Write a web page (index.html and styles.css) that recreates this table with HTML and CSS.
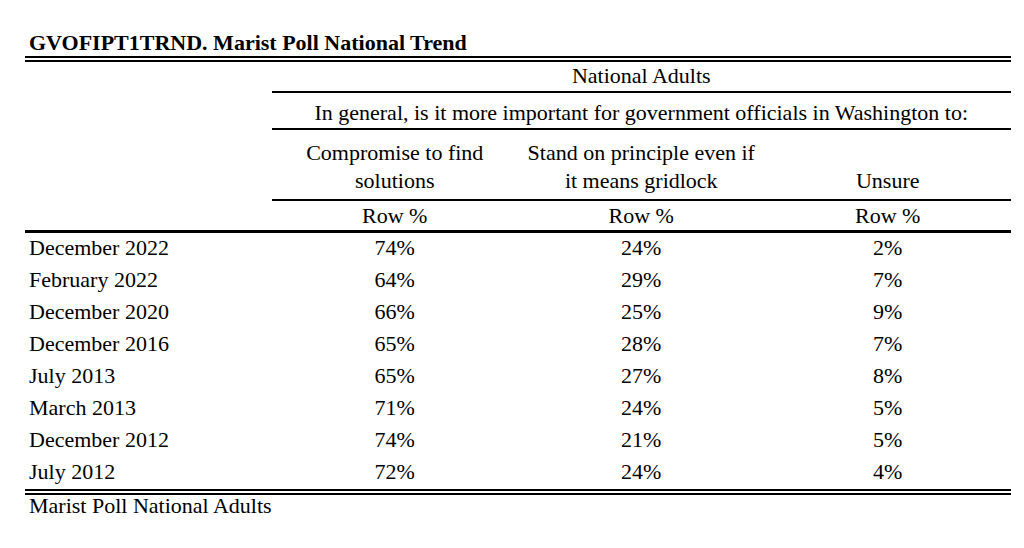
FILE: index.html
```html
<!DOCTYPE html>
<html lang="en">
<head>
<meta charset="utf-8">
<title>GVOFIPT1TRND. Marist Poll National Trend</title>
<link rel="stylesheet" href="styles.css">
</head>
<body>
<div class="page">
  <div class="title">GVOFIPT1TRND. Marist Poll National Trend</div>
  <table class="trend">
    <colgroup>
      <col class="col">
      <col class="col">
      <col class="col">
      <col class="col">
    </colgroup>
    <thead>
      <tr>
        <th class="stub" rowspan="4"></th>
        <th class="h-group" colspan="3">National Adults</th>
      </tr>
      <tr>
        <th class="h-question" colspan="3">In general, is it more important for government officials in Washington to:</th>
      </tr>
      <tr>
        <th class="h-answer">Compromise to find<br>solutions</th>
        <th class="h-answer">Stand on principle even if<br>it means gridlock</th>
        <th class="h-answer">Unsure</th>
      </tr>
      <tr>
        <th class="h-unit">Row %</th>
        <th class="h-unit">Row %</th>
        <th class="h-unit">Row %</th>
      </tr>
    </thead>
    <tbody>
      <tr><td class="label">December 2022</td><td>74%</td><td>24%</td><td>2%</td></tr>
      <tr><td class="label">February 2022</td><td>64%</td><td>29%</td><td>7%</td></tr>
      <tr><td class="label">December 2020</td><td>66%</td><td>25%</td><td>9%</td></tr>
      <tr><td class="label">December 2016</td><td>65%</td><td>28%</td><td>7%</td></tr>
      <tr><td class="label">July 2013</td><td>65%</td><td>27%</td><td>8%</td></tr>
      <tr><td class="label">March 2013</td><td>71%</td><td>24%</td><td>5%</td></tr>
      <tr><td class="label">December 2012</td><td>74%</td><td>21%</td><td>5%</td></tr>
      <tr><td class="label">July 2012</td><td>72%</td><td>24%</td><td>4%</td></tr>
    </tbody>
  </table>
  <div class="footer">Marist Poll National Adults</div>
</div>
</body>
</html>
```

FILE: styles.css
```css
html, body {
  margin: 0;
  padding: 0;
  background: #ffffff;
}

body {
  font-family: "Liberation Serif", "Times New Roman", serif;
  font-size: 22px;
  color: #000000;
}

.page {
  padding: 30px 0 0 25px;
  width: 986px;
}

.title {
  font-weight: bold;
  line-height: 26px;
  padding-left: 4px;
}

.trend {
  width: 986px;
  table-layout: fixed;
  border-collapse: separate;
  border-spacing: 0;
  border-top: 6px double #000000;
  border-bottom: 6px double #000000;
}

.trend .col {
  width: 25%;
}

.trend th,
.trend td {
  padding: 0;
  font-weight: normal;
  text-align: center;
  white-space: nowrap;
}

.trend .stub {
  border-bottom: 3px solid #000000;
}

.trend .h-group {
  line-height: 27px;
  padding-bottom: 2px;
  border-bottom: 2px solid #000000;
}

.trend .h-question {
  line-height: 26px;
  padding-top: 7px;
  padding-bottom: 2px;
  border-bottom: 2px solid #000000;
}

.trend .h-answer {
  line-height: 28px;
  padding-top: 9px;
  padding-bottom: 4px;
  border-bottom: 2px solid #000000;
  vertical-align: bottom;
}

.trend .h-unit {
  line-height: 29px;
  border-bottom: 3px solid #000000;
}

.trend tbody td {
  line-height: 28px;
  padding-top: 1px;
  padding-bottom: 3px;
}

.trend tbody td.label {
  text-align: left;
  padding-left: 4px;
}

.footer {
  line-height: 22px;
  padding-left: 4px;
}
```
